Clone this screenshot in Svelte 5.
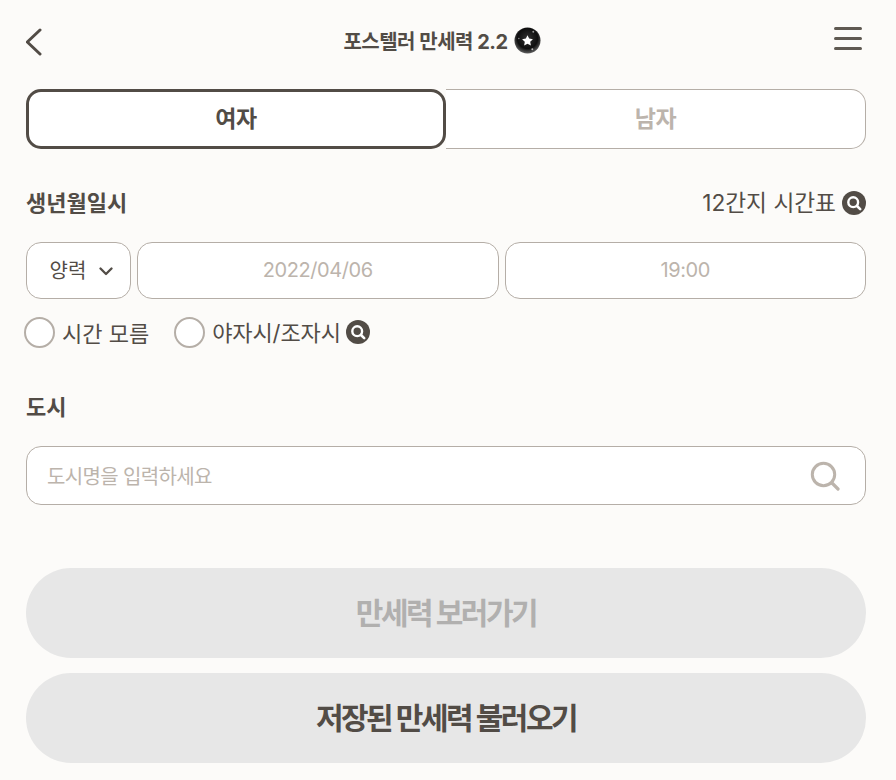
<script>
    let gender = $state('f');
    let city = $state('');
</script>

{#snippet lens()}
    <svg class="lens" viewBox="0 0 24 24" aria-hidden="true">
        <circle cx="12" cy="12" r="12" fill="#524c46" />
        <circle cx="11.2" cy="11.2" r="4.9" fill="none" stroke="#fff" stroke-width="2.4" />
        <path d="M15 15l3.2 3.2" stroke="#fff" stroke-width="2.6" stroke-linecap="round" />
    </svg>
{/snippet}

<div class="page">
    <header>
        <button class="icon-btn back" aria-label="뒤로">
            <svg width="16" height="28" viewBox="0 0 16 28">
                <path d="M14 2L1.3 14 14 26" fill="none" stroke="#524c46" stroke-width="3" stroke-linecap="round" stroke-linejoin="round" />
            </svg>
        </button>
        <h1>
            포스텔러 만세력 2.2
            <svg class="orb" viewBox="0 0 28 28" aria-hidden="true">
                <defs>
                    <radialGradient id="orb-g" cx="50%" cy="42%" r="60%">
                        <stop offset="0%" stop-color="#333" />
                        <stop offset="65%" stop-color="#0e0e0e" />
                        <stop offset="100%" stop-color="#6a6a6a" />
                    </radialGradient>
                </defs>
                <circle cx="14" cy="14" r="13.5" fill="url(#orb-g)" />
                <path d="M14 8.5l1.7 3.5 3.9.6-2.8 2.7.7 3.9-3.5-1.9-3.5 1.9.7-3.9-2.8-2.7 3.9-.6z" fill="#fff" />
                <circle cx="20" cy="5" r="1" fill="#999" />
                <circle cx="5" cy="12" r=".8" fill="#888" />
                <circle cx="19" cy="23" r="1" fill="#bbb" />
            </svg>
        </h1>
        <button class="icon-btn menu" aria-label="메뉴">
            <span></span><span></span><span></span>
        </button>
    </header>

    <div class="tabs">
        <button class="tab" class:active={gender === 'f'} onclick={() => (gender = 'f')}>여자</button>
        <button class="tab" class:active={gender === 'm'} onclick={() => (gender = 'm')}>남자</button>
    </div>

    <div class="label-row">
        <h2>생년월일시</h2>
        <span class="link">12간지 시간표{@render lens()}</span>
    </div>

    <div class="fields">
        <div class="field calendar">
            <span>양력</span>
            <svg width="14" height="9" viewBox="0 0 14 9">
                <path d="M1.5 1.5L7 7l5.5-5.5" fill="none" stroke="#524c46" stroke-width="2.3" stroke-linecap="round" stroke-linejoin="round" />
            </svg>
        </div>
        <div class="field value">2022/04/06</div>
        <div class="field value">19:00</div>
    </div>

    <div class="checks">
        <label class="check"><span class="circle"></span>시간 모름</label>
        <label class="check"><span class="circle"></span><span class="note">야자시/조자시</span>{@render lens()}</label>
    </div>

    <h2 class="city-label">도시</h2>

    <div class="city">
        <input type="text" placeholder="도시명을 입력하세요" bind:value={city} />
        <svg width="30" height="30" viewBox="0 0 30 30" aria-hidden="true">
            <circle cx="13.5" cy="13.5" r="11.2" fill="none" stroke="#bcb4ac" stroke-width="3" />
            <path d="M22 22l6 6" stroke="#bcb4ac" stroke-width="3.2" stroke-linecap="round" />
        </svg>
    </div>

    <button class="pill disabled">만세력 보러가기</button>
    <button class="pill saved">저장된 만세력 불러오기</button>
</div>

<style>
    :global(body) {
        background: #fcfbf9;
    }

    .page {
        box-sizing: border-box;
        width: 896px;
        height: 780px;
        padding: 0 30px 0 26px;
        overflow: hidden;
        color: #524c46;
        font-family: Inter, "Noto Sans CJK KR", sans-serif;
    }

    button {
        font-family: inherit;
        padding: 0;
        border: none;
        background: none;
        cursor: pointer;
    }

    /* Header */
    header {
        display: flex;
        align-items: center;
        justify-content: space-between;
        height: 89px;
    }

    .icon-btn {
        display: flex;
    }

    .back {
        margin-top: -5px;
    }

    .menu {
        flex-direction: column;
        gap: 7px;
        width: 28px;
        margin: -12px 4px 0 0;
    }

    .menu span {
        height: 3px;
        border-radius: 2px;
        background: #5f5952;
    }

    h1 {
        display: flex;
        align-items: center;
        gap: 6px;
        margin: -9px 0 0 8px;
        font-size: 20px;
        font-weight: 700;
        letter-spacing: -0.5px;
    }

    .orb {
        width: 27px;
        height: 27px;
    }

    /* Gender tabs */
    .tabs {
        display: grid;
        grid-template-columns: 420px 1fr;
        height: 60px;
    }

    .tab {
        box-sizing: border-box;
        padding-bottom: 5px;
        border: 1px solid #b5aea7;
        border-left: none;
        border-radius: 0 15px 15px 0;
        background: #fff;
        color: #bcb4ac;
        font-size: 23px;
        font-weight: 700;
        letter-spacing: -0.4px;
    }

    .tab.active {
        border: 3px solid #524c46;
        border-radius: 15px;
        color: #524c46;
    }

    /* Section labels */
    .label-row {
        display: flex;
        align-items: center;
        justify-content: space-between;
        height: 32px;
        margin-top: 38px;
    }

    h2 {
        margin: 0;
        font-size: 22px;
        font-weight: 700;
        line-height: 32px;
    }

    .link {
        display: flex;
        align-items: center;
        gap: 6px;
        margin-top: -1px;
        font-size: 22.7px;
        line-height: 28px;
        white-space: pre;
    }

    .lens {
        width: 24px;
        height: 24px;
    }

    /* Birth fields */
    .fields {
        display: grid;
        grid-template-columns: 105px 1fr 1fr;
        gap: 6px;
        height: 57px;
        margin-top: 23px;
    }

    .field {
        display: flex;
        align-items: center;
        justify-content: center;
        padding-bottom: 2px;
        border: 1px solid #b5aea7;
        border-radius: 15px;
        background: #fff;
        font-size: 20px;
    }

    .calendar {
        gap: 13px;
        padding-left: 6px;
    }

    .calendar svg {
        margin-top: 4px;
    }

    .value {
        color: #bcb4ac;
        letter-spacing: -0.4px;
    }

    /* Checks */
    .checks {
        display: flex;
        gap: 25px;
        height: 32px;
        margin: 17px 0 0 -2px;
    }

    .check {
        display: flex;
        align-items: center;
        gap: 7px;
        font-size: 22px;
        white-space: pre;
    }

    .note {
        margin: -3px -2px 0 0;
        letter-spacing: -0.1px;
    }

    .circle {
        box-sizing: border-box;
        width: 31px;
        height: 31px;
        border: 2px solid #b5aea7;
        border-radius: 50%;
        background: #fff;
    }

    .city-label {
        margin-top: 43px;
    }

    /* City search */
    .city {
        display: flex;
        align-items: center;
        box-sizing: border-box;
        height: 59px;
        margin-top: 23px;
        padding: 0 25px 0 20px;
        border: 1px solid #b5aea7;
        border-radius: 15px;
        background: #fff;
    }

    .city input {
        flex: 1;
        min-width: 0;
        padding: 2px 0 0;
        border: none;
        outline: none;
        background: none;
        color: #524c46;
        font: inherit;
        font-size: 20px;
        letter-spacing: -0.65px;
    }

    .city input::placeholder {
        color: #bcb4ac;
        opacity: 1;
    }

    /* Bottom buttons */
    .pill {
        display: block;
        width: 100%;
        height: 90px;
        padding-bottom: 4px;
        border-radius: 45px;
        background: #e7e7e7;
        font-size: 30px;
        font-weight: 700;
        letter-spacing: -2.5px;
    }

    .disabled {
        margin-top: 63px;
        color: #b1b0af;
    }

    .saved {
        margin-top: 15px;
        color: #524c46;
    }
</style>
